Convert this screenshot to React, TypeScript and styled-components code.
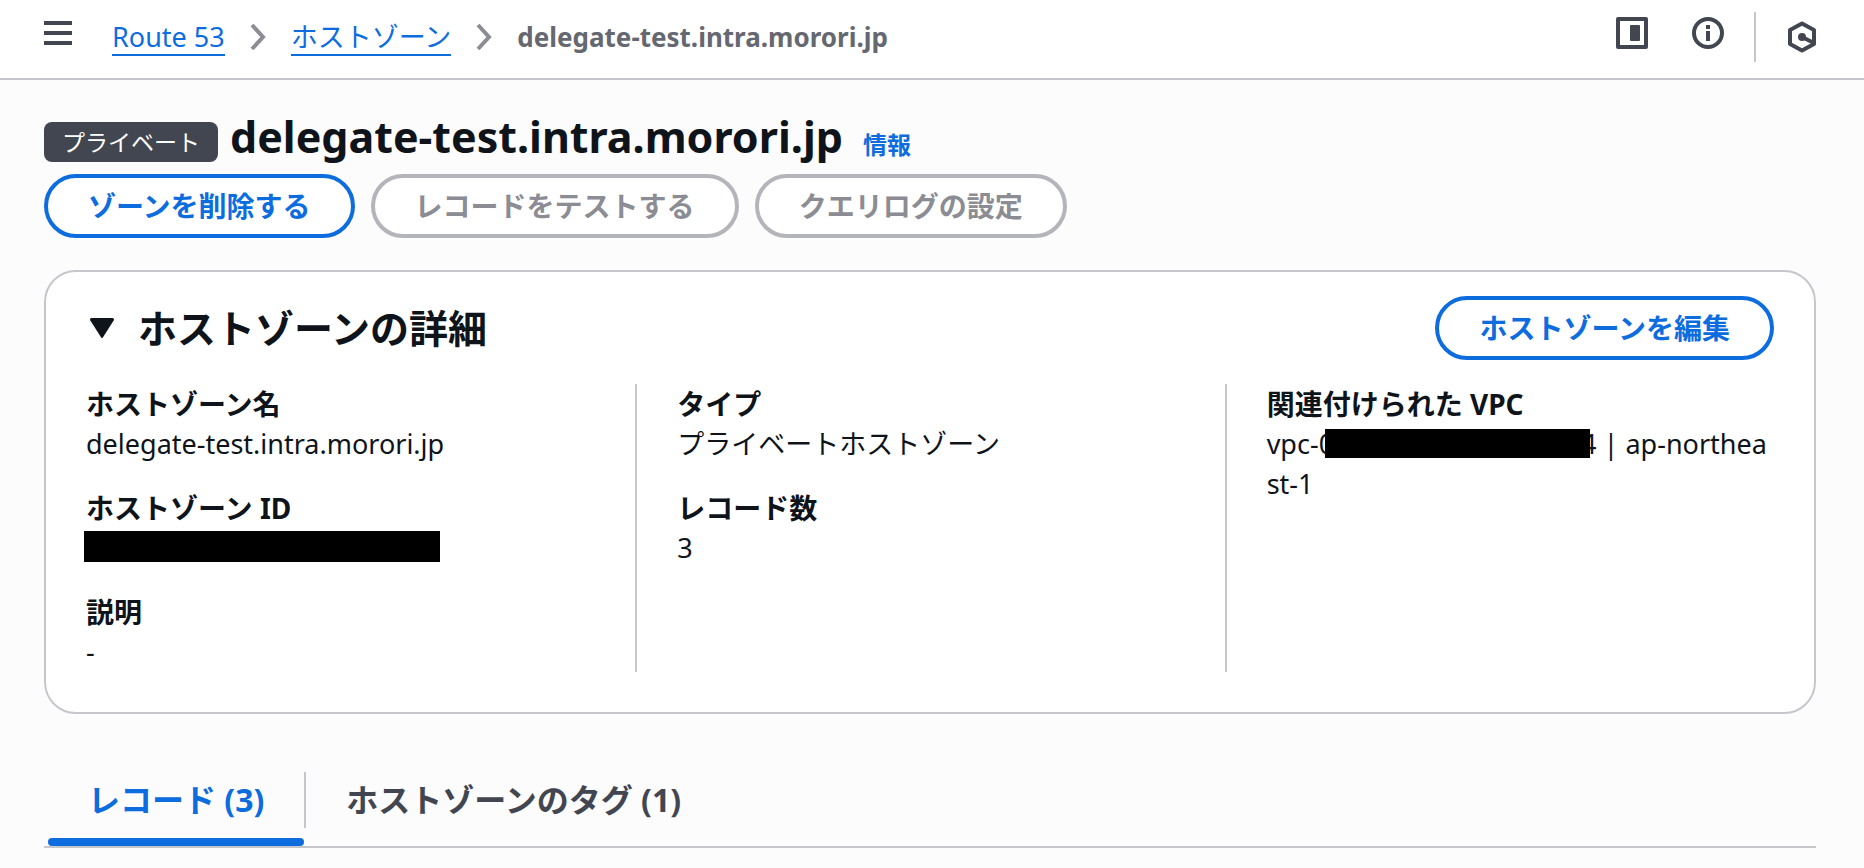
import React, { useState } from "react";
import styled, { createGlobalStyle } from "styled-components";

const color = {
  text: "#0f141a",
  muted: "#656871",
  icon: "#424650",
  link: "#0d6cde",
  line: "#c6c6cd",
  disabledText: "#8c8c94",
  disabledLine: "#b4b4bb",
  page: "#fcfcfd",
};

const GlobalStyle = createGlobalStyle`
  *, *::before, *::after { box-sizing: border-box; }
  body {
    margin: 0;
    background: ${color.page};
    color: ${color.text};
    font-family: "Noto Sans", "Noto Sans CJK JP", sans-serif;
    font-size: 27px;
    line-height: 40px;
  }
  h1, h2, dl, dd, ol { margin: 0; padding: 0; }
  button { font: inherit; color: inherit; cursor: pointer; }
  svg { display: block; flex: none; }
`;

const Header = styled.header`
  display: flex;
  align-items: center;
  padding: 12px 48px 16px 44px;
  background: #fff;
  border-bottom: 2px solid ${color.line};
`;

const IconButton = styled.button<{ $raised?: boolean }>`
  padding: 0;
  border: 0;
  background: none;
  color: ${color.icon};
  margin-bottom: ${(p) => (p.$raised ? "8px" : "0")};
`;

const Breadcrumbs = styled.nav`
  flex: 1;
  margin-left: 40px;
`;

const CrumbList = styled.ol`
  display: flex;
  align-items: center;
  gap: 25px;
  list-style: none;
`;

const Crumb = styled.li`
  display: flex;
  align-items: center;
  gap: 25px;
  line-height: 34px;
  white-space: nowrap;
`;

const CrumbLink = styled.a`
  padding-top: 2px;
  border-bottom: 2px solid currentColor;
  color: ${color.link};
  text-decoration: none;
`;

const CurrentCrumb = styled.span`
  color: ${color.muted};
  font-size: 26px;
  font-weight: 700;
`;

const Tools = styled.div`
  display: flex;
  align-items: center;
`;

const PanelTools = styled.div`
  display: flex;
  gap: 44px;
`;

const ToolDivider = styled.span`
  width: 2px;
  height: 50px;
  margin: 0 32px 0 30px;
  background: ${color.line};
`;

const Main = styled.main`
  padding: 32px 48px 20px 44px;
`;

const TitleRow = styled.div`
  display: flex;
  align-items: flex-end;
`;

const Badge = styled.span`
  padding: 0 18px;
  border-radius: 8px;
  background: ${color.icon};
  color: #fff;
  font-size: 23px;
  line-height: 40px;
  white-space: nowrap;
`;

const Title = styled.h1`
  margin: 0 20px 0 12px;
  font-size: 43px;
  font-weight: 700;
  line-height: 50px;
`;

const InfoLink = styled.a`
  color: ${color.link};
  font-size: 24px;
  font-weight: 700;
  line-height: 34px;
  text-decoration: none;
  white-space: nowrap;
`;

const Actions = styled.div`
  display: flex;
  flex-wrap: wrap;
  gap: 16px;
  margin-top: 12px;
`;

const PillButton = styled.button`
  height: 64px;
  padding: 0 40px;
  border: 4px solid ${color.link};
  border-radius: 32px;
  background: #fff;
  color: ${color.link};
  font-size: 28px;
  font-weight: 700;
  white-space: nowrap;

  &:disabled {
    border-color: ${color.disabledLine};
    color: ${color.disabledText};
    cursor: default;
  }
`;

const Card = styled.section`
  margin-top: 32px;
  padding: 24px 0 40px;
  border: 2px solid ${color.line};
  border-radius: 32px;
  background: #fff;
`;

const CardHeader = styled.div`
  display: flex;
  align-items: center;
  justify-content: space-between;
  padding: 0 40px;
`;

const CardTitle = styled.h2`
  font-size: 39px;
  font-weight: 700;
`;

const Toggle = styled.button<{ $open: boolean }>`
  display: flex;
  align-items: center;
  gap: 24px;
  padding: 0 0 0 4px;
  border: 0;
  background: none;

  svg {
    transform: ${(p) => (p.$open ? "none" : "rotate(-90deg)")};
  }
`;

const Columns = styled.div`
  display: grid;
  grid-template-columns: repeat(3, minmax(0, 1fr));
  margin-top: 24px;
`;

const Column = styled.dl`
  display: flex;
  flex-direction: column;
  gap: 24px;
  padding: 0 40px;

  & + & {
    border-left: 2px solid ${color.line};
  }
`;

const Label = styled.dt`
  font-size: 28px;
  font-weight: 700;
`;

const Value = styled.dd`
  word-break: break-all;
`;

const Mask = styled.span`
  display: inline-block;
  position: relative;
  max-width: 100%;
  vertical-align: -4px;
  background: #000;
`;

const IdMask = styled(Mask)`
  width: 356px;
  height: 31px;
  margin-left: -2px;
`;

const VpcMask = styled(Mask)`
  width: 265px;
  height: 29px;
  margin: 0 -9px;
`;

const TabList = styled.div`
  display: flex;
  margin-top: 58px;
  padding-left: 4px;
  border-bottom: 2px solid ${color.line};
`;

const Tab = styled.button<{ $active: boolean }>`
  padding: 0;
  border: 0;
  border-radius: 0;
  background: none;
  color: ${(p) => (p.$active ? color.link : color.icon)};
  font-size: 32px;
  font-weight: 700;

  &::after {
    content: "";
    display: block;
    height: 8px;
    margin-top: 10px;
    margin-right: 2px;
    border-radius: 4px;
    background: ${(p) => (p.$active ? color.link : "transparent")};
  }
`;

const TabLabel = styled.span`
  display: block;
  padding: 8px 40px;
  border-right: 2px solid ${color.line};
  white-space: nowrap;

  ${Tab}:last-child & {
    border-right-color: transparent;
  }
`;

const MenuIcon = () => (
  <svg width="28" height="32" viewBox="0 0 28 32" fill="currentColor" aria-hidden="true">
    <path d="M0 4h28v4H0zM0 14h28v4H0zM0 24h28v4H0z" />
  </svg>
);

const ChevronIcon = () => (
  <svg width="16" height="28" viewBox="0 0 16 28" fill="none" stroke={color.disabledText} strokeWidth="4" aria-hidden="true">
    <path d="M2 2l11 12L2 26" />
  </svg>
);

const PanelIcon = () => (
  <svg width="32" height="32" viewBox="0 0 32 32" fill="none" aria-hidden="true">
    <rect x="2" y="2" width="28" height="28" stroke="currentColor" strokeWidth="4" strokeLinejoin="round" />
    <rect x="14" y="8" width="10" height="16" rx="1" fill="currentColor" />
  </svg>
);

const InfoIcon = () => (
  <svg width="32" height="32" viewBox="0 0 32 32" fill="none" aria-hidden="true">
    <circle cx="16" cy="16" r="14" stroke="currentColor" strokeWidth="4" />
    <path d="M14 8h4v4h-4zM14 14h4v10h-4z" fill="currentColor" />
  </svg>
);

const HexagonIcon = () => (
  <svg width="28" height="32" viewBox="0 0 28 32" fill="none" stroke="currentColor" strokeWidth="4" strokeLinejoin="round" aria-hidden="true">
    <path d="M14 2.500L26 9v14l-12 6.500L2 23V9z" />
    <path d="M14 16l12 6" />
    <circle cx="14" cy="16" r="4" fill="currentColor" stroke="none" />
  </svg>
);

const CaretIcon = () => (
  <svg width="24" height="20" viewBox="0 0 24 20" fill="currentColor" aria-hidden="true">
    <path d="M1.500 0h21a1.500 1.500 0 0 1 1.300 2.200L13 19.300a1.200 1.200 0 0 1-2 0L.2 2.200A1.500 1.500 0 0 1 1.500 0z" />
  </svg>
);

const tabs = ["レコード (3)", "ホストゾーンのタグ (1)"];

function Field({ label, children }: { label: string; children: React.ReactNode }) {
  return (
    <div>
      <Label>{label}</Label>
      <Value>{children}</Value>
    </div>
  );
}

export default function App() {
  const [open, setOpen] = useState(true);
  const [active, setActive] = useState(0);

  return (
    <div lang="ja">
      <GlobalStyle />
      <Header>
        <IconButton $raised aria-label="メニュー">
          <MenuIcon />
        </IconButton>
        <Breadcrumbs aria-label="パンくずリスト">
          <CrumbList>
            <Crumb>
              <CrumbLink href="#route53">Route 53</CrumbLink>
              <ChevronIcon />
            </Crumb>
            <Crumb>
              <CrumbLink href="#zones">ホストゾーン</CrumbLink>
              <ChevronIcon />
            </Crumb>
            <Crumb>
              <CurrentCrumb aria-current="page">delegate-test.intra.morori.jp</CurrentCrumb>
            </Crumb>
          </CrumbList>
        </Breadcrumbs>
        <Tools>
          <PanelTools>
            <IconButton $raised aria-label="パネル">
              <PanelIcon />
            </IconButton>
            <IconButton $raised aria-label="情報">
              <InfoIcon />
            </IconButton>
          </PanelTools>
          <ToolDivider />
          <IconButton aria-label="Amazon Q">
            <HexagonIcon />
          </IconButton>
        </Tools>
      </Header>

      <Main>
        <TitleRow>
          <Badge>プライベート</Badge>
          <Title>delegate-test.intra.morori.jp</Title>
          <InfoLink href="#info">情報</InfoLink>
        </TitleRow>
        <Actions>
          <PillButton>ゾーンを削除する</PillButton>
          <PillButton disabled>レコードをテストする</PillButton>
          <PillButton disabled>クエリログの設定</PillButton>
        </Actions>

        <Card>
          <CardHeader>
            <CardTitle>
              <Toggle $open={open} aria-expanded={open} onClick={() => setOpen(!open)}>
                <CaretIcon />
                ホストゾーンの詳細
              </Toggle>
            </CardTitle>
            <PillButton>ホストゾーンを編集</PillButton>
          </CardHeader>
          {open && (
            <Columns>
              <Column>
                <Field label="ホストゾーン名">delegate-test.intra.morori.jp</Field>
                <Field label="ホストゾーン ID">
                  <IdMask />
                </Field>
                <Field label="説明">-</Field>
              </Column>
              <Column>
                <Field label="タイプ">プライベートホストゾーン</Field>
                <Field label="レコード数">3</Field>
              </Column>
              <Column>
                <Field label="関連付けられた VPC">
                  vpc-0
                  <VpcMask />4 | ap-northeast-1
                </Field>
              </Column>
            </Columns>
          )}
        </Card>

        <TabList role="tablist">
          {tabs.map((name, i) => (
            <Tab key={name} role="tab" $active={i === active} aria-selected={i === active} onClick={() => setActive(i)}>
              <TabLabel>{name}</TabLabel>
            </Tab>
          ))}
        </TabList>
      </Main>
    </div>
  );
}
